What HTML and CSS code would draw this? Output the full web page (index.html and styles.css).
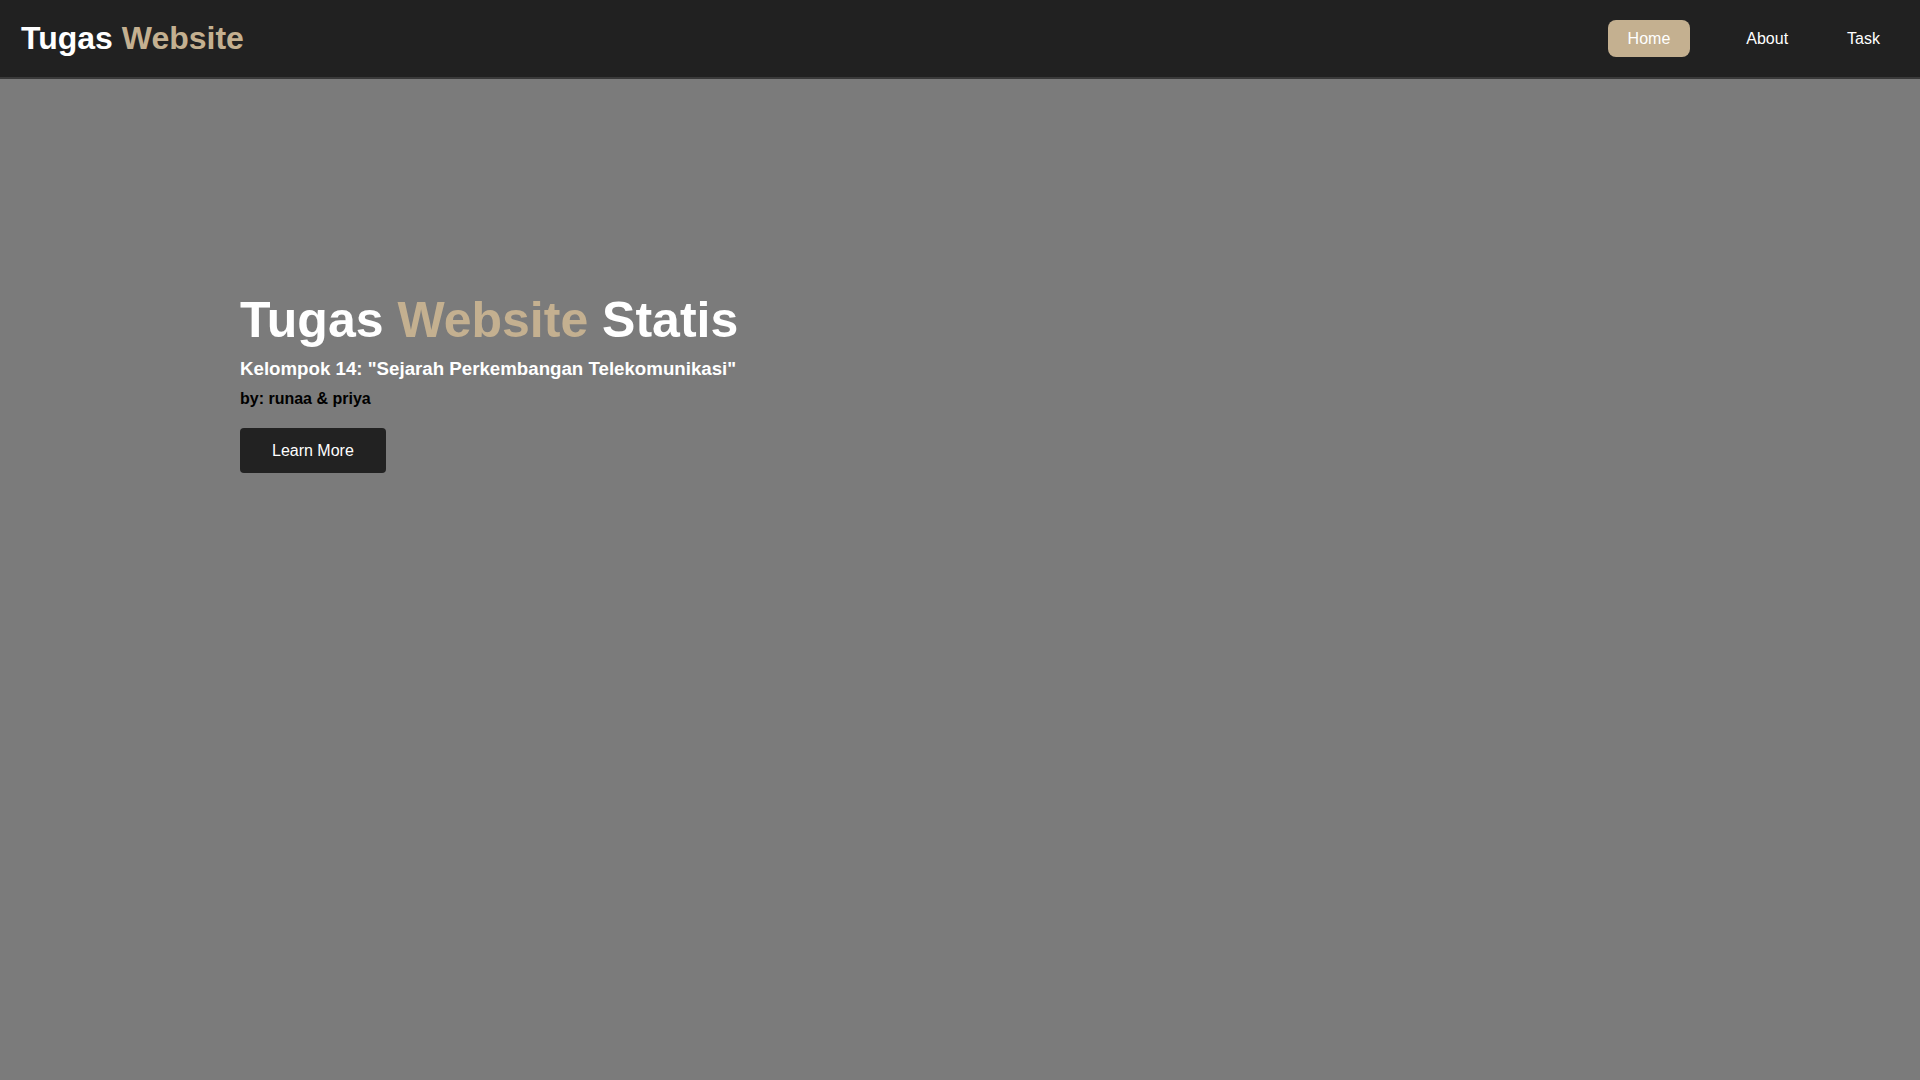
FILE: index.html
```html
<!DOCTYPE html>
<html lang="id">
<head>
<meta charset="utf-8">
<title>Tugas Website</title>
<link rel="stylesheet" href="styles.css">
</head>
<body>
<header class="navbar">
  <div class="logo">Tugas <span class="accent">Website</span></div>
  <nav class="nav">
    <a class="nav-link active" href="#">Home</a>
    <a class="nav-link" href="#">About</a>
    <a class="nav-link" href="#">Task</a>
  </nav>
</header>
<main class="hero">
  <h1 class="hero-title">Tugas <span class="accent">Website</span> Statis</h1>
  <h2 class="hero-sub">Kelompok 14: "Sejarah Perkembangan Telekomunikasi"</h2>
  <p class="hero-by">by: runaa &amp; priya</p>
  <a class="btn" href="#">Learn More</a>
</main>
</body>
</html>
```

FILE: styles.css
```css
* { box-sizing: border-box; }
html, body {
  margin: 0;
  padding: 0;
  height: 100%;
}
body {
  font-family: "Liberation Sans", Arial, sans-serif;
  background: #7b7b7b;
  color: #fff;
}
.navbar {
  display: flex;
  justify-content: space-between;
  align-items: center;
  height: 79px;
  padding: 0 20px 0 21px;
  background: #212121;
  border-bottom: 2px solid #3a3a3a;
}
.logo {
  font-size: 32px;
  font-weight: bold;
  color: #fff;
}
.accent { color: #c4b090; }
.nav {
  display: flex;
  align-items: center;
  gap: 19px;
}
.nav-link {
  color: #fff;
  text-decoration: none;
  font-size: 16px;
  line-height: 19px;
  padding: 9px 20px;
  border-radius: 8px;
}
.nav-link.active {
  background: #c4b090;
  margin-right: 17px;
}
.hero {
  padding: 211px 0 0 240px;
}
.hero-title {
  margin: 0;
  font-size: 50px;
  line-height: 60px;
  font-weight: bold;
  color: #fff;
}
.hero-sub {
  margin: 7px 0 0;
  font-size: 18.7px;
  line-height: 23px;
  font-weight: bold;
  color: #fff;
}
.hero-by {
  margin: 9px 0 0;
  font-size: 16px;
  line-height: 19px;
  font-weight: bold;
  color: #000;
}
.btn {
  display: inline-block;
  margin-top: 20px;
  padding: 13px 32px;
  font-size: 16px;
  line-height: 19px;
  background: #222;
  color: #fff;
  text-decoration: none;
  border-radius: 4px;
}
```
